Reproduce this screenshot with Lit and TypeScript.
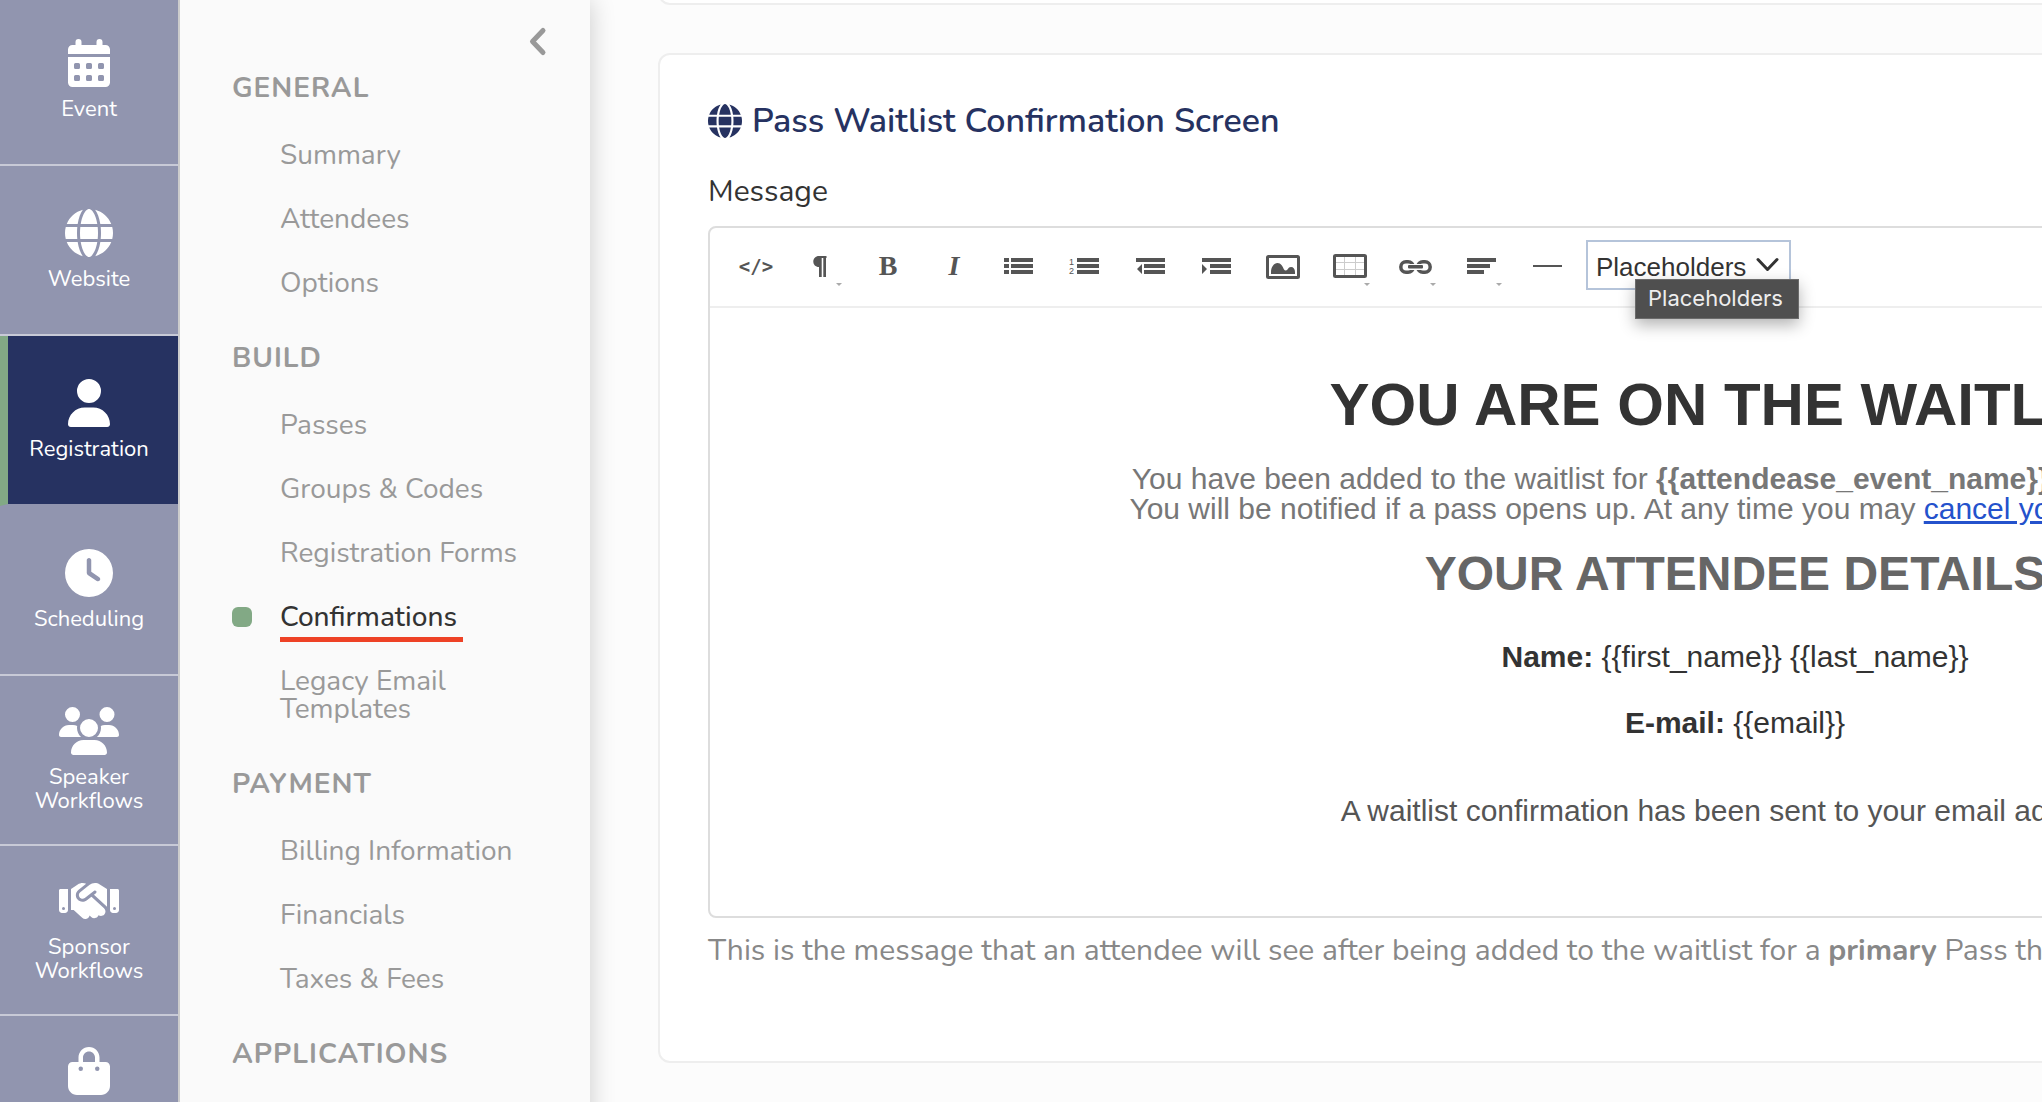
import { LitElement, html, css, svg, nothing } from "lit";
import type { SVGTemplateResult } from "lit";
import { customElement } from "lit/decorators.js";
import { classMap } from "lit/directives/class-map.js";

interface RailItem {
  lines: string[];
  icon: SVGTemplateResult;
  iconWidth: number;
  active?: boolean;
}

interface NavGroup {
  title: string;
  links: string[];
}

interface Tool {
  name: string;
  art: SVGTemplateResult | string;
  style?: string;
  menu?: boolean;
}

const GLOBE = svg`<path d="M352 256c0 22.200-1.200 43.600-3.300 64H163.300c-2.200-20.400-3.300-41.800-3.300-64s1.200-43.600 3.300-64H348.700c2.200 20.400 3.300 41.800 3.300 64zm28.800-64H503.900c5.300 20.500 8.100 41.900 8.100 64s-2.800 43.500-8.100 64H380.800c2.100-20.600 3.200-42 3.200-64s-1.100-43.400-3.200-64zm112.600-32H376.700c-10-63.900-29.800-117.400-55.300-151.600c78.300 20.700 142 77.500 171.900 151.600zm-149.100 0H167.700c6.100-36.400 15.500-68.600 27-94.700c10.500-23.600 22.200-40.700 33.500-51.500C239.400 3.200 248.700 0 256 0s16.600 3.200 27.800 13.800c11.300 10.800 23 27.900 33.500 51.500c11.600 26 20.900 58.200 27 94.700zm-209 0H18.600C48.600 85.900 112.200 29.100 190.600 8.400C165.100 42.600 145.300 96.100 135.300 160zM8.100 192H131.200c-2.100 20.600-3.200 42-3.200 64s1.100 43.400 3.200 64H8.100C2.800 299.500 0 278.100 0 256s2.800-43.500 8.100-64zM194.700 446.600c-11.600-26-20.900-58.200-27-94.600H344.300c-6.100 36.400-15.500 68.600-27 94.600c-10.500 23.600-22.200 40.700-33.500 51.500C272.600 508.800 263.300 512 256 512s-16.600-3.200-27.800-13.800c-11.300-10.800-23-27.900-33.500-51.500zM135.300 352c10 63.900 29.800 117.400 55.300 151.600C112.200 482.900 48.600 426.100 18.600 352H135.300zm358.100 0c-30 74.100-93.600 130.900-171.900 151.600c25.500-34.200 45.200-87.700 55.300-151.600H493.400z"/>`;

const RAIL: RailItem[] = [
  {
    lines: ["Event"],
    iconWidth: 448,
    icon: svg`<path fill-rule="evenodd" d="M80 32a32 32 0 0 1 64 0v32h160V32a32 32 0 0 1 64 0v32h32c26.500 0 48 21.500 48 48v48H0v-48c0-26.500 21.500-48 48-48h32zM0 192h448v272c0 26.500-21.500 48-48 48H48c-26.500 0-48-21.500-48-48zM80 256a16 16 0 0 0-16 16v32a16 16 0 0 0 16 16h32a16 16 0 0 0 16-16v-32a16 16 0 0 0-16-16zm128 0a16 16 0 0 0-16 16v32a16 16 0 0 0 16 16h32a16 16 0 0 0 16-16v-32a16 16 0 0 0-16-16zm128 0a16 16 0 0 0-16 16v32a16 16 0 0 0 16 16h32a16 16 0 0 0 16-16v-32a16 16 0 0 0-16-16zM80 384a16 16 0 0 0-16 16v32a16 16 0 0 0 16 16h32a16 16 0 0 0 16-16v-32a16 16 0 0 0-16-16zm128 0a16 16 0 0 0-16 16v32a16 16 0 0 0 16 16h32a16 16 0 0 0 16-16v-32a16 16 0 0 0-16-16zm128 0a16 16 0 0 0-16 16v32a16 16 0 0 0 16 16h32a16 16 0 0 0 16-16v-32a16 16 0 0 0-16-16z"/>`,
  },
  { lines: ["Website"], iconWidth: 512, icon: GLOBE },
  {
    lines: ["Registration"],
    iconWidth: 448,
    active: true,
    icon: svg`<path d="M224 256A128 128 0 1 0 224 0a128 128 0 1 0 0 256zm-45.700 48C79.800 304 0 383.800 0 482.300C0 498.700 13.300 512 29.700 512H418.300c16.400 0 29.700-13.300 29.700-29.700C448 383.800 368.200 304 269.700 304H178.300z"/>`,
  },
  {
    lines: ["Scheduling"],
    iconWidth: 512,
    icon: svg`<path fill-rule="evenodd" d="M256 0a256 256 0 1 1 0 512A256 256 0 1 1 256 0zM232 120V256c0 8 4 15.500 10.700 20l96 64c11 7.400 25.900 4.400 33.300-6.700s4.400-25.900-6.700-33.300L280 243.200V120c0-13.300-10.700-24-24-24s-24 10.700-24 24z"/>`,
  },
  {
    lines: ["Speaker", "Workflows"],
    iconWidth: 640,
    icon: svg`<path d="M144 0a80 80 0 1 1 0 160A80 80 0 1 1 144 0zM512 0a80 80 0 1 1 0 160A80 80 0 1 1 512 0zM0 298.700C0 239.800 47.800 192 106.700 192h42.700c15.900 0 31 3.500 44.600 9.700c-1.300 7.200-1.900 14.700-1.900 22.300c0 38.200 16.800 72.500 43.300 96c-.2 0-.4 0-.7 0H21.300C9.600 320 0 310.400 0 298.700zM405.300 320c-.2 0-.4 0-.7 0c26.600-23.500 43.300-57.800 43.300-96c0-7.600-.7-15-1.900-22.300c13.600-6.300 28.700-9.700 44.600-9.700h42.700C592.200 192 640 239.800 640 298.700c0 11.800-9.600 21.300-21.300 21.300H405.300zM224 224a96 96 0 1 1 192 0 96 96 0 1 1-192 0zM128 485.300C128 411.700 187.700 352 261.300 352H378.700C452.300 352 512 411.700 512 485.300c0 14.700-11.900 26.700-26.700 26.700H154.700c-14.700 0-26.700-11.900-26.700-26.700z"/>`,
  },
  {
    lines: ["Sponsor", "Workflows"],
    iconWidth: 640,
    icon: svg`<path fill-rule="evenodd" d="M323.400 85.200l-96.800 78.400c-16.100 13-19.200 36.400-7 53.100c12.900 17.800 38 21.300 55.300 7.800l99.300-77.200c7-5.400 17-4.200 22.500 2.800s4.200 17-2.800 22.500l-20.900 16.200L512 316.800V128h-.7l-3.900-2.500L434.800 79c-15.300-9.800-33.200-15-51.400-15c-21.800 0-43 7.500-60 21.200zm22.800 124.400l-51.700 40.200C263 274.300 217.300 268 193.700 235.600c-22.200-30.500-16.600-73.100 12.700-96.800l83.200-67.300c-11.600-4.900-24.100-7.400-36.800-7.400C234 64 215.700 69.600 200 80l-72 48V352h28.200l91.400 83.400c19.600 17.900 49.900 16.500 67.800-3.100c5.500-6.100 9.200-13.200 11.100-20.600l17 15.600c19.500 17.900 49.900 16.600 67.800-2.900c4.500-4.900 7.800-10.600 9.900-16.500c19.400 13 45.800 10.300 62.100-7.500c17.900-19.500 16.600-49.900-2.900-67.800l-134.200-123zM16 128c-8.800 0-16 7.200-16 16V352c0 17.700 14.300 32 32 32H64c17.700 0 32-14.300 32-32V128H16zM48 320a16 16 0 1 1 0 32 16 16 0 1 1 0-32zM544 128V352c0 17.700 14.300 32 32 32h32c17.700 0 32-14.300 32-32V144c0-8.800-7.200-16-16-16H544zm32 208a16 16 0 1 1 32 0 16 16 0 1 1-32 0z"/>`,
  },
  {
    lines: [],
    iconWidth: 448,
    icon: svg`<path fill-rule="evenodd" d="M160 112c0-35.300 28.700-64 64-64s64 28.700 64 64v48H160V112zm-48 48H48c-26.500 0-48 21.500-48 48V416c0 53 43 96 96 96H352c53 0 96-43 96-96V208c0-26.500-21.500-48-48-48H336V112C336 50.100 285.900 0 224 0S112 50.100 112 112v48zm24 48a24 24 0 1 1 0 48 24 24 0 1 1 0-48zm152 24a24 24 0 1 1 48 0 24 24 0 1 1-48 0z"/>`,
  },
];

const GROUPS: NavGroup[] = [
  { title: "General", links: ["Summary", "Attendees", "Options"] },
  {
    title: "Build",
    links: ["Passes", "Groups & Codes", "Registration Forms", "Confirmations", "Legacy Email Templates"],
  },
  { title: "Payment", links: ["Billing Information", "Financials", "Taxes & Fees"] },
  { title: "Applications", links: [] },
];
const CURRENT_LINK = "Confirmations";

const TOOLS: Tool[] = [
  { name: "Source", art: "</>", style: "code" },
  {
    name: "Paragraph format",
    menu: true,
    art: svg`<path d="M21.500 5v2H21v19h-2.700V7h-1.600v19H14V16c-3.500 0-5.700-2.500-5.700-5.500S10.500 5 14 5z"/>`,
  },
  { name: "Bold", art: "B", style: "bold" },
  { name: "Italic", art: "I", style: "italic" },
  {
    name: "Bulleted list",
    art: svg`<path d="M1 7h5v4H1zM1 13h5v4H1zM1 19h5v4H1zM8 7h22v4H8zM8 13h22v4H8zM8 19h22v4H8z"/>`,
  },
  {
    name: "Numbered list",
    art: svg`<path d="M8 7h22v4H8zM8 13h22v4H8zM8 19h22v4H8z"/><text class="digit" x="0" y="14">1</text><text class="digit" x="0" y="23">2</text>`,
  },
  {
    name: "Outdent",
    art: svg`<path d="M1 7h29v4H1zM9 13h21v4H9zM9 19h21v4H9zM7 13v10l-5-5z"/>`,
  },
  {
    name: "Indent",
    art: svg`<path d="M1 7h29v4H1zM9 13h21v4H9zM9 19h21v4H9zM1 13v10l5-5z"/>`,
  },
  {
    name: "Image",
    art: svg`<rect x="0.5" y="5.500" width="31" height="21" rx="1" fill="none" stroke="currentColor" stroke-width="3"/><path d="M4 23v-2c0-5 3-9 6.500-9s5 3 6.500 6.500c1 1.500 2.500 1.200 3.500 0c1-1.700 2-2.500 3.500-2.500c2.500 0 4 2 4 5v2z"/>`,
  },
  {
    name: "Table",
    menu: true,
    art: svg`<path d="M11.500 5v20M22.500 5v20M2 11.500h30M2 18.500h30" fill="none" stroke="#ccc"/><rect x="1.500" y="4.500" width="31" height="21" rx="1" fill="none" stroke="currentColor" stroke-width="3"/>`,
  },
  {
    name: "Link",
    menu: true,
    art: svg`<g fill="none" stroke="currentColor" stroke-width="3.500"><rect x="1.800" y="10.800" width="12.500" height="10.500" rx="5.200"/><rect x="18.700" y="10.800" width="12.500" height="10.500" rx="5.200"/></g><path d="M9.500 13h14v6h-14z" fill="#fff"/><rect x="9" y="14" width="15" height="3.500" rx="1"/>`,
  },
  {
    name: "Align",
    menu: true,
    art: svg`<path d="M2 7h29v4H2zM2 13h23v4H2zM2 19h17v4H2z"/>`,
  },
  { name: "Horizontal rule", art: svg`<path d="M2 14h29v2H2z"/>` },
];

@customElement("side-rail")
export class SideRail extends LitElement {
  static styles = css`
    :host {
      display: block;
      flex: none;
      width: 178px;
      z-index: 2;
      background: #9195af;
      border-right: 2px solid #ccc;
    }
    /* The rail is shown scrolled by a few pixels. */
    .list {
      margin: -4px 0 0;
      padding: 0;
      list-style: none;
    }
    .item {
      box-sizing: border-box;
      height: 170px;
      padding: 0 8px;
      border-bottom: 2px solid #c8cad7;
      display: flex;
      flex-direction: column;
      align-items: center;
      justify-content: center;
      gap: 10px;
      color: #fff;
      font-size: 22px;
      line-height: 24px;
      text-align: center;
      text-decoration: none;
    }
    .item.active {
      background: #263261;
      background-clip: padding-box;
      border-left: 8px solid #82a985;
      border-bottom-color: #9195af;
      padding-left: 0;
    }
    .item.bare {
      justify-content: flex-start;
      padding-top: 31px;
    }
    .icon {
      height: 48px;
      fill: currentColor;
    }
    .line {
      display: block;
    }
  `;

  render() {
    return html`<ul class="list">
      ${RAIL.map(
        (item) => html`<li>
          <a
            href="#"
            class=${classMap({ item: true, active: !!item.active, bare: item.lines.length === 0 })}
            aria-label=${item.lines.join(" ") || "Store"}
          >
            <svg class="icon" viewBox="0 0 ${item.iconWidth} 512" aria-hidden="true">${item.icon}</svg>
            <span>${item.lines.map((line) => html`<span class="line">${line}</span>`)}</span>
          </a>
        </li>`
      )}
    </ul>`;
  }
}

@customElement("section-nav")
export class SectionNav extends LitElement {
  static styles = css`
    :host {
      display: block;
      flex: none;
      box-sizing: border-box;
      width: 410px;
      padding: 0 40px 0 52px;
      z-index: 1;
      background: #fafafa;
      box-shadow: 0 0 24px rgba(0, 0, 0, 0.2);
      color: #999;
      font-size: 28px;
      line-height: 28px;
    }
    .head {
      display: flex;
      justify-content: flex-end;
      box-sizing: border-box;
      height: 74px;
      padding-top: 26px;
    }
    .collapse {
      width: 24px;
      height: 32px;
      padding: 0;
      border: 0;
      background: none;
      color: inherit;
    }
    .chevron {
      display: block;
      width: 24px;
      height: 32px;
      fill: none;
      stroke: currentColor;
      stroke-width: 5;
      stroke-linecap: round;
      stroke-linejoin: round;
    }
    .title {
      margin: 0 0 21px;
      font-size: 28px;
      font-weight: 700;
      letter-spacing: 1px;
      text-transform: uppercase;
    }
    .links {
      margin: 0 0 29px;
      padding: 0;
      list-style: none;
    }
    .link {
      display: grid;
      grid-template-columns: 20px 1fr;
      column-gap: 28px;
      align-items: center;
      padding: 18px 20px 18px 0;
      color: inherit;
      text-decoration: none;
    }
    .marker {
      height: 20px;
      border-radius: 6px;
    }
    .current {
      color: #333;
      font-weight: 500;
    }
    .current .marker {
      background: #82a985;
    }
    .text {
      justify-self: start;
      position: relative;
    }
    .current .text::after {
      content: "";
      position: absolute;
      left: 0;
      right: -6px;
      top: 34px;
      height: 5px;
      background: #ee4226;
    }
  `;

  render() {
    return html`
      <div class="head">
        <button class="collapse" aria-label="Collapse menu">
          <svg class="chevron" viewBox="0 0 24 32" aria-hidden="true"><path d="M17 4.500L6.500 15.500L17 26.500" /></svg>
        </button>
      </div>
      ${GROUPS.map(
        (group) => html`
          <h2 class="title">${group.title}</h2>
          <ul class="links">
            ${group.links.map(
              (link) => html`<li>
                <a href="#" class=${classMap({ link: true, current: link === CURRENT_LINK })}>
                  <span class="marker"></span><span class="text">${link}</span>
                </a>
              </li>`
            )}
          </ul>
        `
      )}
    `;
  }
}

@customElement("message-editor")
export class MessageEditor extends LitElement {
  static styles = css`
    :host {
      display: block;
      border: 2px solid #ddd;
      border-radius: 8px;
      background: #fff;
      font-family: "Liberation Sans", Arial, sans-serif;
      color: #333;
    }
    .toolbar {
      display: flex;
      align-items: center;
      height: 76px;
      padding: 0 13px 2px;
      border-bottom: 2px solid #eee;
    }
    .tool {
      display: flex;
      align-items: center;
      justify-content: center;
      width: 66px;
      height: 76px;
      padding: 0;
      border: 0;
      background: none;
      color: #555;
    }
    .glyph {
      width: 34px;
      height: 30px;
      overflow: visible;
      fill: currentColor;
    }
    .digit {
      font-family: "Liberation Sans", sans-serif;
      font-size: 9px;
    }
    .code {
      font: 700 19px "DejaVu Sans Mono", monospace;
    }
    .bold {
      font: 700 28px "Liberation Serif", serif;
    }
    .italic {
      font: italic 700 28px "Liberation Serif", serif;
    }
    .picker {
      position: relative;
      display: grid;
      align-items: center;
      box-sizing: border-box;
      width: 205px;
      height: 50px;
      margin: 0 0 2px 5px;
      border: 2px solid #b5c4da;
    }
    .select,
    .arrow {
      grid-area: 1 / 1;
    }
    .select {
      appearance: none;
      width: 100%;
      height: 46px;
      padding: 4px 0 0 8px;
      border: 0;
      background: none;
      color: #333;
      font: 26px "Liberation Sans", Arial, sans-serif;
    }
    .arrow {
      justify-self: end;
      width: 24px;
      height: 16px;
      margin-right: 10px;
      pointer-events: none;
      fill: none;
      stroke: #333;
      stroke-width: 3;
      stroke-linecap: round;
      stroke-linejoin: round;
    }
    .tooltip {
      position: absolute;
      left: 47px;
      top: 37px;
      padding: 4px 15px 6px 12px;
      border: 1px solid #6b6b6b;
      background: #4f4f4f;
      box-shadow: 0 6px 16px rgba(0, 0, 0, 0.3);
      color: #eee;
      font: 22px/28px Inter, sans-serif;
    }
    .body {
      padding: 64px 20px 90px;
      font-size: 30px;
      line-height: 30px;
      text-align: center;
    }
    .body p {
      margin: 0;
    }
    .headline {
      margin: 0 0 26px;
      font-size: 60px;
      line-height: 66px;
    }
    .intro {
      color: #777;
    }
    .intro a {
      color: #2452cc;
    }
    .details {
      margin: 22px 0 40px;
      color: #666;
      font-size: 48px;
      line-height: 56px;
    }
    .body .field {
      margin-bottom: 36px;
    }
    .body .sent {
      margin-top: 58px;
      color: #555;
    }
  `;

  render() {
    return html`
      <div class="toolbar" role="toolbar" aria-label="Formatting">
        ${TOOLS.map(
          (tool) => html`<button class="tool" aria-label=${tool.name}>
            ${typeof tool.art === "string"
              ? html`<span class=${tool.style ?? ""}>${tool.art}</span>`
              : html`<svg class="glyph" viewBox="0 0 34 30" aria-hidden="true">
                  ${tool.art}${tool.menu ? svg`<path d="M31 32h6l-3 3z" fill="#aaa"/>` : nothing}
                </svg>`}
          </button>`
        )}
        <div class="picker">
          <select class="select" aria-label="Placeholders">
            <option>Placeholders</option>
          </select>
          <svg class="arrow" viewBox="0 0 24 16" aria-hidden="true"><path d="M3 2.500L12.500 12.500L22 2.500" /></svg>
          <span class="tooltip" role="tooltip">Placeholders</span>
        </div>
      </div>
      <div class="body">
        <h1 class="headline">YOU ARE ON THE WAITLIST</h1>
        <p class="intro">
          You have been added to the waitlist for <b>{{attendease_event_name}}</b> for the relevant pass.<br />
          You will be notified if a pass opens up. At any time you may <a href="#">cancel your waitlist registration</a>.
        </p>
        <h2 class="details">YOUR ATTENDEE DETAILS</h2>
        <p class="field"><b>Name:</b> {{first_name}} {{last_name}}</p>
        <p class="field"><b>E-mail:</b> {{email}}</p>
        <p class="sent">A waitlist confirmation has been sent to your email address.</p>
      </div>
    `;
  }
}

@customElement("app-root")
export class AppRoot extends LitElement {
  static styles = css`
    :host {
      display: block;
      height: 100vh;
      overflow: hidden;
      background: #fcfcfc;
      font-family: Nunito, Lato, sans-serif;
    }
    .app {
      display: flex;
      min-width: 2880px;
      min-height: 100%;
    }
    /* The page is shown scrolled to its second card. */
    .main {
      flex: 1;
      display: flex;
      flex-direction: column;
      gap: 48px;
      margin-top: -59px;
      padding: 0 68px;
    }
    .card {
      border: 2px solid #eee;
      border-radius: 12px;
      background: #fff;
      padding: 44px 48px 90px;
    }
    .card.previous {
      box-sizing: border-box;
      height: 64px;
      padding: 0;
    }
    .title {
      display: flex;
      align-items: center;
      gap: 10px;
      margin: 0 0 29px;
      color: #263261;
      font-size: 34px;
      line-height: 44px;
      font-weight: 600;
    }
    .globe {
      width: 34px;
      height: 34px;
      fill: currentColor;
    }
    .label {
      margin: 0 0 14px;
      color: #333;
      font-size: 30px;
      line-height: 40px;
    }
    .help {
      margin: 13px 0 0;
      color: #888;
      font-size: 30px;
      line-height: 40px;
      white-space: nowrap;
    }
  `;

  render() {
    return html`<div class="app">
      <side-rail role="navigation" aria-label="Sections"></side-rail>
      <section-nav role="navigation" aria-label="Registration"></section-nav>
      <main class="main">
        <section class="card previous"></section>
        <section class="card">
          <h1 class="title">
            <svg class="globe" viewBox="0 0 512 512" aria-hidden="true">${GLOBE}</svg>
            Pass Waitlist Confirmation Screen
          </h1>
          <p class="label" id="message-label">Message</p>
          <message-editor role="group" aria-labelledby="message-label"></message-editor>
          <p class="help">
            This is the message that an attendee will see after being added to the waitlist for a
            <b>primary</b> Pass that is full.
          </p>
        </section>
      </main>
    </div>`;
  }
}
